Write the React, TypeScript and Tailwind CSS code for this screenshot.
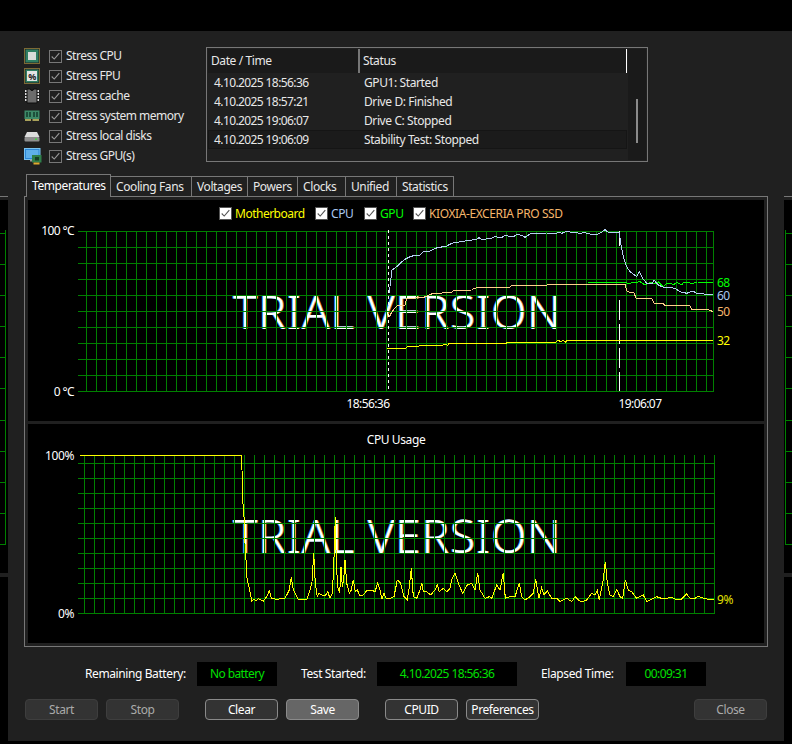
import type { ReactNode } from 'react';

const stressItems = ['Stress CPU', 'Stress FPU', 'Stress cache', 'Stress system memory', 'Stress local disks', 'Stress GPU(s)'];

const logRows = [
  ['4.10.2025 18:56:36', 'GPU1: Started'],
  ['4.10.2025 18:57:21', 'Drive D: Finished'],
  ['4.10.2025 19:06:07', 'Drive C: Stopped'],
  ['4.10.2025 19:06:09', 'Stability Test: Stopped'],
];

const tabs = [
  ['Cooling Fans', 'w-[82px]'],
  ['Voltages', 'w-[57px]'],
  ['Powers', 'w-[51px]'],
  ['Clocks', 'w-[49px]'],
  ['Unified', 'w-[52px]'],
  ['Statistics', 'w-[58px]'],
];

// traced from the reference, in zoomed (3x) coordinates
const cpuTemp = [[28,280],[32,240],[36,210],[50,200],[60,190],[75,178],[90,170],[105,166],[120,165],[130,155],[150,153],[165,145],[180,142],[200,138],[215,130],[230,127],[245,125],[260,122],[290,118],[297,113],[305,118],[330,116],[345,110],[365,113],[375,105],[385,108],[400,110],[412,103],[425,106],[435,112],[450,102],[480,100],[500,99],[530,99],[535,96],[545,100],[563,93],[575,99],[590,97],[600,102],[610,97],[620,100],[630,102],[655,102],[665,96],[675,89],[685,97],[718,97],[722,130],[730,170],[740,200],[750,215],[770,230],[778,214],[790,238],[800,250],[815,252],[822,240],[835,255],[850,262],[865,262],[885,265],[900,275],[920,280],[938,273],[950,280],[1000,285]];
const ssdTemp = [[28,350],[36,335],[50,318],[75,315],[80,295],[130,293],[135,290],[160,280],[215,278],[220,271],[275,270],[282,265],[305,262],[390,262],[395,256],[500,256],[505,253],[735,253],[742,275],[762,278],[768,295],[815,295],[822,310],[850,311],[855,317],[930,318],[935,328],[985,329],[1000,335]];
const gpuTemp = [[625,248],[735,247],[745,250],[760,248],[780,245],[795,255],[810,248],[825,250],[835,245],[850,260],[860,250],[872,250],[880,255],[890,247],[905,255],[910,248],[925,247],[935,252],[950,246],[1000,247]];
const boardTemp = [[22,445],[78,445],[82,440],[135,437],[190,435],[198,432],[203,436],[208,430],[378,430],[382,427],[528,427],[535,420],[541,425],[549,421],[556,427],[562,421],[1000,421]];

const usageLeft = [[240,106],[723,106],[726,150],[728,240],[732,290],[735,370],[738,420],[741,475],[748,505],[755,543],[762,538],[768,544],[775,536],[790,544],[800,530],[808,512],[814,535],[830,538],[855,535],[860,525],[868,510],[874,472],[880,510],[888,525],[893,537],[920,540],[930,510],[936,485],[941,400],[946,490],[952,530],[956,520],[965,525],[975,528],[983,515],[990,535],[997,520],[1001,440],[1006,292],[1009,430],[1013,500],[1019,520],[1023,440],[1027,500],[1031,480],[1035,420],[1040,490],[1048,520],[1054,510],[1060,480],[1066,515],[1072,510],[1080,528],[1090,525],[1100,512],[1118,512],[1125,515],[1133,490],[1140,510],[1146,538],[1152,520],[1158,535],[1170,535]];
const usageRight = [[0,535],[12,530],[22,480],[32,490],[42,530],[52,540],[58,500],[64,445],[70,530],[80,535],[90,510],[95,488],[100,515],[110,515],[122,525],[135,510],[142,495],[148,515],[160,505],[170,515],[180,505],[185,480],[195,458],[205,490],[218,520],[232,495],[245,490],[255,510],[263,458],[270,510],[285,535],[298,530],[305,535],[320,495],[330,510],[340,458],[346,535],[360,530],[375,530],[388,490],[395,530],[405,540],[420,530],[430,520],[437,478],[447,535],[455,503],[462,525],[472,512],[485,535],[500,535],[510,545],[530,535],[545,545],[555,530],[565,540],[575,545],[590,540],[605,520],[615,525],[622,512],[628,540],[640,480],[646,425],[652,490],[660,525],[670,530],[680,508],[690,530],[698,535],[706,480],[715,510],[725,515],[740,535],[760,525],[770,545],[790,535],[800,530],[820,537],[845,532],[855,537],[875,537],[890,522],[900,535],[915,535],[925,528],[935,533],[950,537],[972,537]];

const toPoints = (pts: number[][], ox: number, oy: number) =>
  pts.map(([x, y]) => `${(ox + x / 3).toFixed(1)},${(oy + y / 3).toFixed(1)}`).join(' ');

const range = (from: number, to: number, step: number) => {
  const out: number[] = [];
  for (let v = from; v <= to; v += step) out.push(v);
  return out;
};

const Grid = ({ xs, ys, top, bottom }: { xs: number[]; ys: number[]; top: number; bottom: number }) => (
  <g>
    {xs.map(x => <rect key={x} x={x} y={top} width={1} height={bottom - top} fill="#008000" />)}
    {ys.map(y => <rect key={y} x={78} y={y} width={636} height={1} fill="#008000" />)}
  </g>
);

const Trace = ({ points, color }: { points: string; color: string }) => (
  <polyline points={points} fill="none" stroke={color} strokeWidth="1" shapeRendering="crispEdges" />
);

const CheckMark = ({ color }: { color: string }) => (
  <svg viewBox="0 0 13 13" className="w-[11px] h-[11px]">
    <path d="M2 6.5 L5 9.5 L11 2.5" fill="none" stroke={color} strokeWidth="1.3" />
  </svg>
);

const StressIcon = ({ index }: { index: number }) => {
  if (index === 0 || index === 1) return (
    <svg viewBox="0 0 16 16" className="w-4 h-4">
      <rect x="0.5" y="0.5" width="15" height="15" fill="none" stroke="#d9b44a" strokeWidth="1" strokeDasharray="1 1" />
      <rect x="1.5" y="1.5" width="13" height="13" fill="#2f7f62" />
      {index === 0 && <rect x="4" y="4" width="8" height="8" fill="#d8dcd8" />}
      {index === 1 && <rect x="3" y="3" width="10" height="10" fill="#e4e4e4" />}
      {index === 1 && <text x="8" y="11.5" textAnchor="middle" fontSize="9" fontWeight="700" fill="#222">%</text>}
    </svg>
  );
  if (index === 2) return (
    <svg viewBox="0 0 16 16" className="w-4 h-4">
      <path d="M1 2h2v2H1zM1 5h2v2H1zM1 8h2v2H1zM1 11h2v2H1zM13 2h2v2h-2zM13 5h2v2h-2zM13 8h2v2h-2zM13 11h2v2h-2z" fill="#e0e0e0" />
      <path d="M3 1h3.5a1.5 1.5 0 0 0 3 0H13v14H3z" fill="#6c6c6c" stroke="#0c0c0c" />
    </svg>
  );
  if (index === 3) return (
    <svg viewBox="0 0 16 12" className="w-4 h-3">
      <rect x="0.5" y="0.5" width="15" height="8.5" fill="#3d8a68" />
      <path d="M2 2h2v5H2zM5 2h2v5H5zM9 2h2v5H9zM12 2h2v5h-2z" fill="#1d4f3b" />
      <path d="M1 9h6v2H1zM8.5 9H15v2H8.5z" fill="#a9a15a" />
    </svg>
  );
  if (index === 4) return (
    <svg viewBox="0 0 16 11" className="w-4 h-[11px]">
      <path d="M3 1h10l2.5 5h-15z" fill="#dcdcdc" />
      <rect x="0.5" y="6" width="15" height="4.5" rx="1" fill="#8f8f8f" />
      <rect x="11" y="7.5" width="2" height="1.5" fill="#3fd63f" />
    </svg>
  );
  return (
    <svg viewBox="0 0 18 17" className="w-[18px] h-[17px]">
      <rect x="0.5" y="0.5" width="15.5" height="11" fill="#2c86d6" stroke="#7cc3ee" />
      <rect x="2" y="2" width="12.5" height="8" fill="#5fb0ea" />
      <path d="M6 11.5h4v2H6z" fill="#9a9a9a" />
      <rect x="8" y="7" width="9.5" height="7.5" fill="#2f7f4a" />
      <rect x="11" y="9" width="4" height="3.5" fill="#173f27" />
      <rect x="9.5" y="14.5" width="6" height="2" fill="#e0a92e" />
    </svg>
  );
};

const Strip = ({ side }: { side: 'left' | 'right' }) => (
  <div className="w-2 flex flex-col shrink-0">
    <div className="h-[165px] bg-[#202020]" />
    <div className="h-px bg-[#777]" />
    <div className="h-[3px] bg-[#202020]" />
    <svg width="8" height="373" viewBox="0 0 8 373" className="block">
      <g fill="#008000">
        <rect x={side === 'left' ? 5 : 1} y={30} width={1} height={314} />
        {range(33, 344, 31.1).map(y => (
          <rect key={y} x={side === 'left' ? 0 : 1} y={Math.round(y)} width={side === 'left' ? 6 : 7} height={1} />
        ))}
      </g>
    </svg>
    <div className="h-1 bg-[#202020]" />
  </div>
);

const TrialText = ({ className }: { className: string }) => (
  <div className={`absolute left-[205px] w-[326px] text-center text-[46px] leading-none font-light tracking-[0.8px] whitespace-nowrap text-white [text-shadow:-0.7px_0_0_#2f8fe8,0.7px_0_0_#c9803c] ${className}`}>
    TRIAL VERSION
  </div>
);

const LegendItem = ({ label, color, width }: { label: string; color: string; width: string }) => (
  <div className={`flex items-center gap-[3px] ${width}`}>
    <span className="w-[13px] h-[13px] bg-white border border-[#555] flex items-center justify-center shrink-0">
      <CheckMark color="#555" />
    </span>
    <span className={color}>{label}</span>
  </div>
);

const TempChart = () => (
  <div className="relative h-[221px] bg-black">
    <TrialText className="top-[88px]" />
    <svg viewBox="28 200 736 221" className="absolute inset-0 w-full h-full">
      <Grid xs={[...range(86, 706, 10), 713]} ys={range(231, 391, 16)} top={231} bottom={392} />
      <line x1="388.5" x2="388.5" y1="230" y2="391" stroke="#fff" strokeDasharray="3 3" />
      <line x1="619.5" x2="619.5" y1="231" y2="246" stroke="#fff" />
      <line x1="619.5" x2="619.5" y1="300" y2="391" stroke="#fff" strokeDasharray="20 4" />
      <Trace points={toPoints(boardTemp, 380, 200)} color="#ffff00" />
      <Trace points={toPoints(gpuTemp, 380, 200)} color="#00ff00" />
      <Trace points={toPoints(ssdTemp, 380, 200)} color="#ffd08a" />
      <Trace points={toPoints(cpuTemp, 380, 200)} color="#b4d0f2" />
      <g fontSize="12" fill="#fff" letterSpacing="-0.6">
        <text x="74" y="235" textAnchor="end">100 °C</text>
        <text x="74" y="396" textAnchor="end">0 °C</text>
        <text x="368" y="408" textAnchor="middle">18:56:36</text>
        <text x="640" y="408" textAnchor="middle">19:06:07</text>
      </g>
      <g fontSize="12" letterSpacing="-0.6">
        <text x="717" y="287" fill="#00ff00">68</text>
        <text x="717" y="300" fill="#a9c8f0">60</text>
        <text x="717" y="316" fill="#f5b56b">50</text>
        <text x="717" y="345" fill="#ffff00">32</text>
      </g>
    </svg>
    <div className="relative flex pl-[191px] pt-[7px] h-[28px] items-start">
      <LegendItem label="Motherboard" color="text-[#ffff00] tracking-[-0.5px]" width="w-[96px]" />
      <LegendItem label="CPU" color="text-[#a9c8f0]" width="w-[49px]" />
      <LegendItem label="GPU" color="text-[#00ff00]" width="w-[49px]" />
      <LegendItem label="KIOXIA-EXCERIA PRO SSD" color="text-[#f5b56b]" width="w-[160px]" />
    </div>
  </div>
);

const UsageChart = () => (
  <div className="relative h-[219px] bg-black">
    <TrialText className="top-[88px]" />
    <svg viewBox="28 424 736 219" className="absolute inset-0 w-full h-full">
      <Grid xs={[...range(84, 704, 10), 714]} ys={range(463, 613, 15)} top={455} bottom={614} />
      <Trace points={`${toPoints(usageLeft, 0, 420)} ${toPoints(usageRight, 390, 420)}`} color="#ffff00" />
      <g fontSize="12" fill="#fff">
        <text x="396" y="444" textAnchor="middle">CPU Usage</text>
        <text x="74" y="460" textAnchor="end">100%</text>
        <text x="74" y="618" textAnchor="end">0%</text>
      </g>
      <text x="717" y="604" fontSize="12" fill="#e0e000">9%</text>
    </svg>
  </div>
);

const Readout = ({ width, children }: { width: string; children: ReactNode }) => (
  <div className={`h-6 bg-black text-[#00e000] tracking-[-0.6px] flex items-center justify-center ${width}`}>{children}</div>
);

const Btn = ({ label, kind = 'normal', className = '' }: { label: string; kind?: 'normal' | 'off' | 'hot'; className?: string }) => {
  const skin = kind === 'off'
    ? 'bg-[#333] border-[#3e3e3e] text-[#aaa]'
    : kind === 'hot'
      ? 'bg-[#666] border-[#8a8a8a] text-white'
      : 'bg-[#333] border-[#8a8a8a] text-white';
  return (
    <button className={`w-[73px] h-[21px] rounded-[4px] border flex items-center justify-center shrink-0 ${skin} ${className}`}>
      {label}
    </button>
  );
};

const App = () => {
  return (
    <div className="w-[792px] h-[744px] bg-black overflow-hidden font-['Noto_Sans',sans-serif] text-[12px] leading-none tracking-[-0.4px] text-[#e8e8e8]">
      <div className="h-[31px]" />
      <div className="flex items-start">
        <Strip side="left" />
        <div className="w-[776px] h-[710px] bg-[#202020] pl-4 shrink-0">
          {/* stress options + log */}
          <div className="flex h-[143px]">
            <div className="w-[182px] pt-[15px] flex flex-col tracking-[-0.5px]">
              {stressItems.map((label, i) => (
                <div key={label} className="h-5 flex items-center">
                  <span className="w-[25px] flex justify-start shrink-0"><StressIcon index={i} /></span>
                  <span className="w-[13px] h-[13px] border border-[#777] flex items-center justify-center mr-[4px] shrink-0">
                    <CheckMark color="#9a9a9a" />
                  </span>
                  <span className="whitespace-nowrap">{label}</span>
                </div>
              ))}
            </div>
            <div className="mt-4 w-[442px] h-[115px] border border-[#777] p-px flex">
              <div className="w-[421px]">
                <div className="h-6 mt-0 bg-[#1a1a1a] flex items-center relative">
                  <span className="pl-[3px] w-[150px]">Date / Time</span>
                  <span className="w-[2px] h-full bg-[#777]" />
                  <span className="pl-[3px]">Status</span>
                  <span className="absolute right-0 top-0 w-px h-full bg-white" />
                </div>
                {logRows.map(([when, what], i) => (
                  <div key={when} className={`h-[19px] flex items-center ${i === 3 ? 'bg-[#1b1b1b] border border-[#151515]' : ''}`}>
                    <span className={`tracking-[-0.6px] ${i === 3 ? 'pl-[5px] w-[155px]' : 'pl-[6px] w-[156px]'}`}>{when}</span>
                    <span>{what}</span>
                  </div>
                ))}
              </div>
              <div className="w-[18px] ml-px bg-[#1a1a1a] pt-[50px] pl-[8px]">
                <div className="w-[2px] h-11 bg-[#8a8a8a]" />
              </div>
            </div>
          </div>
          {/* tabs */}
          <div className="flex items-end h-[22px] pl-[2px]">
            <div className="relative z-10 w-[85px] h-[23px] -mb-px bg-[#202020] border border-b-0 border-[#777] flex items-center pl-[5px] text-white">
              Temperatures
            </div>
            {tabs.map(([label, w]) => (
              <div key={label} className={`${w} -ml-px h-5 border border-b-0 border-[#777] flex items-center pl-[5px]`}>
                {label}
              </div>
            ))}
          </div>
          {/* pane */}
          <div className="w-[744px] h-[451px] border border-[#777] p-[3px] flex flex-col gap-[3px]">
            <TempChart />
            <UsageChart />
          </div>
          {/* readouts */}
          <div className="flex items-center mt-[15px] h-6 pl-[61px]">
            <span className="w-[112px] text-white">Remaining Battery:</span>
            <Readout width="w-20">No battery</Readout>
            <span className="ml-6 w-[76px] text-white">Test Started:</span>
            <Readout width="w-[140px]">4.10.2025 18:56:36</Readout>
            <span className="ml-6 w-[85px] text-white">Elapsed Time:</span>
            <Readout width="w-20">00:09:31</Readout>
          </div>
          {/* buttons */}
          <div className="flex items-center mt-[13px] pl-px">
            <Btn label="Start" kind="off" />
            <Btn label="Stop" kind="off" className="ml-2" />
            <Btn label="Clear" className="ml-[26px]" />
            <Btn label="Save" kind="hot" className="ml-2" />
            <Btn label="CPUID" className="ml-[26px]" />
            <Btn label="Preferences" className="ml-2" />
            <Btn label="Close" kind="off" className="ml-[155px]" />
          </div>
        </div>
        <Strip side="right" />
      </div>
    </div>
  );
};

export default App;
